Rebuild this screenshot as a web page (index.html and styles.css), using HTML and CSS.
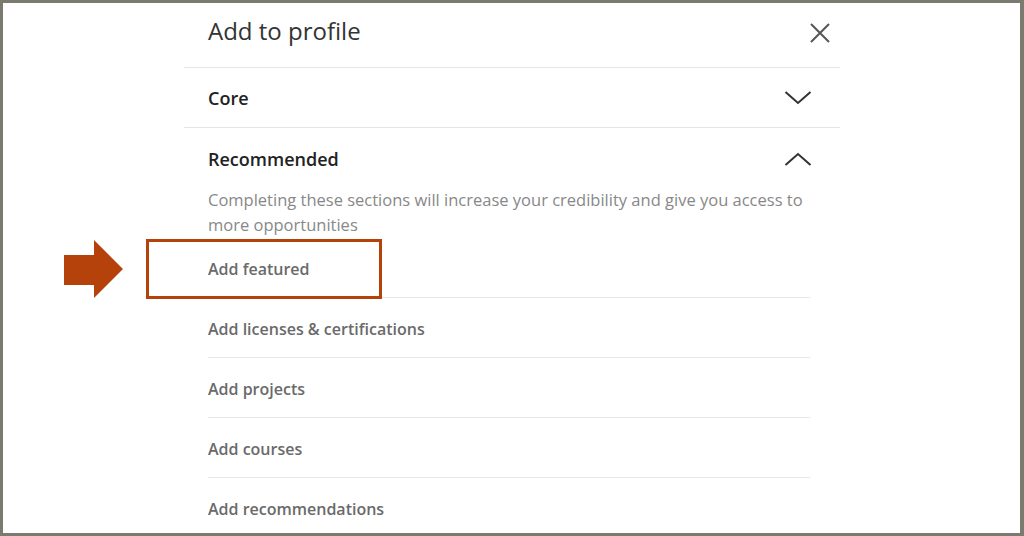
FILE: index.html
```html
<!DOCTYPE html>
<html lang="en">
<head>
    <meta charset="UTF-8">
    <meta name="viewport" content="width=device-width, initial-scale=1.0">
    <title>Add to profile</title>
    <link rel="stylesheet" href="styles.css">
</head>
<body>
    <div class="frame">
        <div class="pointer">
            <svg width="60" height="60" viewBox="0 0 60 60">
                <polygon points="0,15 30,15 30,0 59,29 30,58 30,45 0,45" fill="#b5420a"/>
            </svg>
        </div>
        <div class="modal">
            <div class="modal-header">
                <h2>Add to profile</h2>
                <button class="close" aria-label="Dismiss">
                    <svg width="24" height="24" viewBox="0 0 24 24">
                        <path d="M3 3 L21 21 M21 3 L3 21" stroke="#555" stroke-width="2" fill="none"/>
                    </svg>
                </button>
            </div>
            <div class="section">
                <div class="section-head">
                    <span>Core</span>
                    <svg class="chevron" width="28" height="16" viewBox="0 0 28 16">
                        <path d="M1.5 2 L14 13 L26.5 2" stroke="#333" stroke-width="2" fill="none"/>
                    </svg>
                </div>
            </div>
            <div class="section open">
                <div class="section-head">
                    <span>Recommended</span>
                    <svg class="chevron" width="28" height="16" viewBox="0 0 28 16">
                        <path d="M1.5 14 L14 3 L26.5 14" stroke="#333" stroke-width="2" fill="none"/>
                    </svg>
                </div>
                <p class="desc">Completing these sections will increase your credibility and give you access to more opportunities</p>
                <ul class="items">
                    <li class="highlight">Add featured</li>
                    <li>Add licenses &amp; certifications</li>
                    <li>Add projects</li>
                    <li>Add courses</li>
                    <li>Add recommendations</li>
                </ul>
            </div>
        </div>
    </div>
</body>
</html>
```

FILE: styles.css
```css
*, *::before {
    box-sizing: border-box;
}

body {
    margin: 0;
    background-color: #fff;
    font-family: "Open Sans", "Noto Sans", sans-serif;
}

.frame {
    position: relative;
    height: 536px;
    border: 3px solid #7a7a6e;
    border-right-width: 4px;
    overflow: hidden;
    padding-left: 181px;
}

.modal {
    width: 656px;
}

.modal-header {
    display: flex;
    justify-content: space-between;
    align-items: center;
    height: 65px;
    padding: 0 8px 9px 24px;
    border-bottom: 1px solid #e6e6e6;
}

.modal-header h2 {
    margin: 0;
    font-size: 24px;
    font-weight: 400;
    color: #333;
}

.close {
    border: none;
    background: none;
    padding: 0;
    display: flex;
    margin-top: 5px;
}

.section {
    padding: 0 30px 0 24px;
    border-bottom: 1px solid #e6e6e6;
}

.section.open {
    border-bottom: none;
}

.section-head {
    display: flex;
    justify-content: space-between;
    align-items: center;
    height: 59px;
    font-size: 18px;
    font-weight: 600;
    color: #222;
}

.section.open .section-head {
    height: 61px;
}

.chevron {
    margin-right: -2px;
}

.desc {
    margin: -2px 0 1px;
    font-size: 16.5px;
    line-height: 25px;
    color: #888;
}

.items {
    list-style: none;
    margin: 0;
    padding: 0;
}

.items li {
    display: flex;
    align-items: center;
    height: 60px;
    padding-top: 2px;
    border-bottom: 1px solid #e8e8e8;
    font-size: 16px;
    font-weight: 600;
    color: #6a6a6a;
}

.items li.highlight {
    position: relative;
}

.items li.highlight::before {
    content: "";
    position: absolute;
    left: -62px;
    top: 1px;
    width: 236px;
    height: 60px;
    border: 3px solid #b5420a;
}

.pointer {
    position: absolute;
    left: 61px;
    top: 237px;
    display: flex;
}
```
